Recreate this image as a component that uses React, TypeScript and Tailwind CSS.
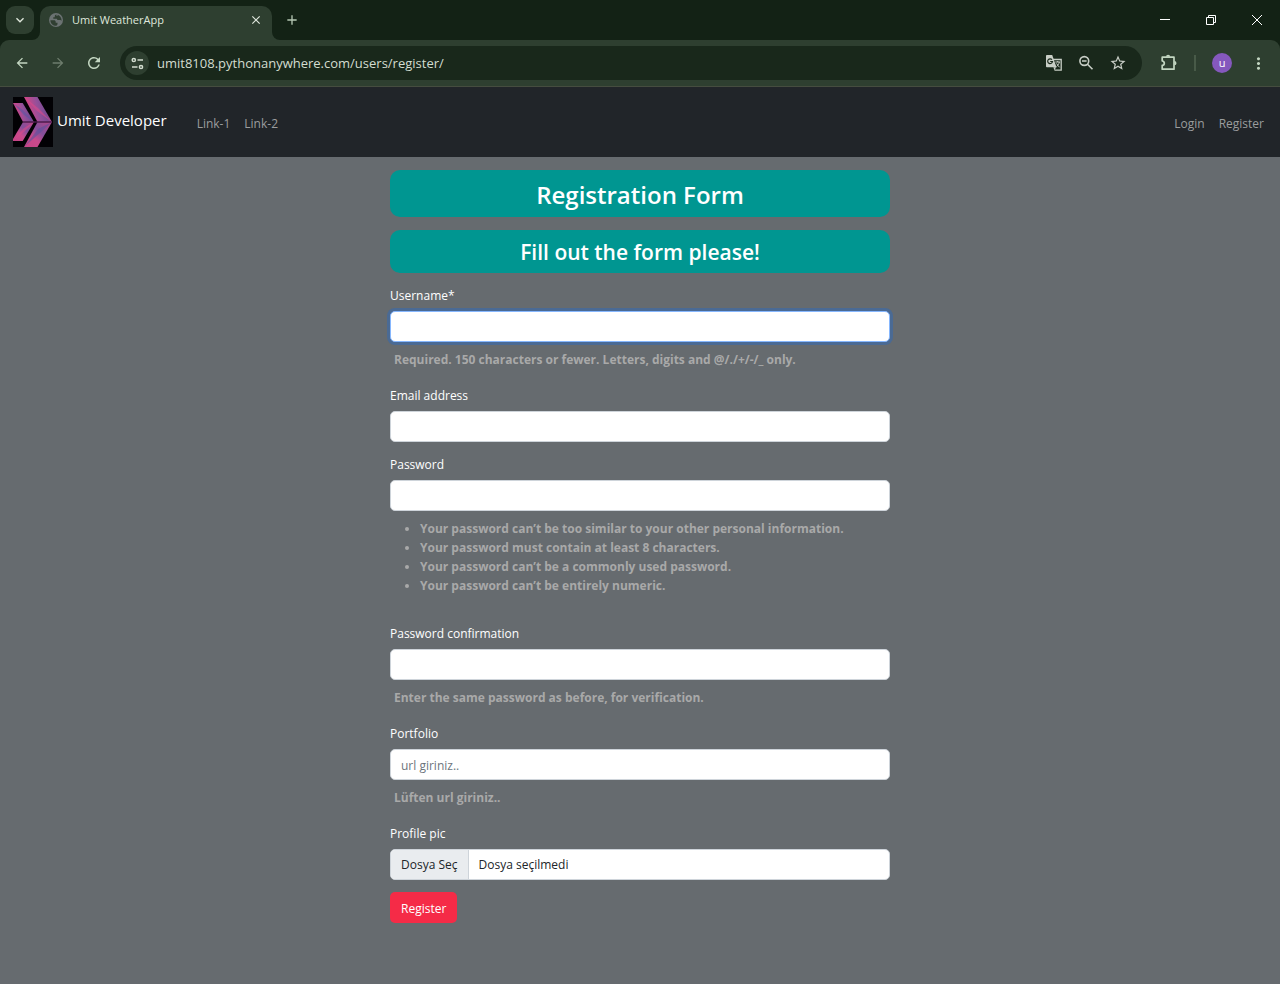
import React from "react";
import {
  MdAdd,
  MdArrowBack,
  MdArrowForward,
  MdClose,
  MdKeyboardArrowDown,
  MdMoreVert,
  MdRefresh,
  MdStarBorder,
} from "react-icons/md";

const inputClass =
  "block h-[31px] w-full rounded-[5px] border border-[#ced4da] bg-white px-2.5 pt-0.5 text-xs text-[#212529] outline-none placeholder:text-[#6c757d] focus:border-[#86b7fe] focus:shadow-[0_0_0_3px_#4a6a94]";

function GlobeIcon() {
  return (
    <svg width="16" height="16" viewBox="0 0 16 16">
      <circle cx="8" cy="8" r="7" fill="#6b7272" />
      <path d="M2.4 8.200h3.400c1.300 0 1.900.7 1.900 1.700v.9H9.500v1.200c0 .8-.5 1.500-1.300 1.800-3.300 0-5.800-2.500-5.800-5.600z" fill="#303f32" />
      <path d="M8.500 2.400c-1 .1-1.700.8-1.700 1.600v1.200H5.300v1.500h2.900c.9 0 1.200.7 1.200 1.400h2.400c.8 0 1.200.6 1.800.6.1-2.800-1.600-5-3.800-5.900 0 .9-.5 1.300-1.300 1.300z" fill="#303f32" />
    </svg>
  );
}

function TuneIcon() {
  return (
    <svg width="13" height="13" viewBox="0 0 13 13" fill="none" stroke="currentColor" strokeWidth="1.5">
      <circle cx="2.8" cy="3" r="1.6" />
      <path d="M6.5 3H12M1 10h5.5" />
      <circle cx="10" cy="10" r="1.6" />
    </svg>
  );
}

function TranslateIcon() {
  return (
    <svg width="18" height="18" viewBox="0 0 18 18" fill="none" stroke="currentColor">
      <path d="M8 5.5h8.200v10.700H9.500" strokeWidth="1.300" />
      <path d="M1.800 1h5.400l4.300 12.200H1.800A.9.900 0 0 1 1 12.300V1.900A.9.900 0 0 1 1.800 1z" fill="currentColor" stroke="none" />
      <path d="M8.400 13.200h2.800l-1.800 3z" fill="currentColor" stroke="none" />
      <path d="M7 5.700A2.400 2.400 0 1 0 7.500 7.500H5.200" stroke="#19281b" strokeWidth="1.200" />
      <path d="M10.300 8h4.800M12.700 7v1M14.300 8c-.3 2-1.500 3.700-2.900 4.800M11.600 9.400c.7 1.500 1.700 2.700 3 3.900" strokeWidth="1" />
    </svg>
  );
}

function ZoomOutIcon() {
  return (
    <svg width="16" height="16" viewBox="0 0 16 16" fill="none" stroke="currentColor" strokeWidth="1.600">
      <circle cx="6.300" cy="6" r="4.400" />
      <path d="M4 6h4.600M9.500 9.300l5 5" />
    </svg>
  );
}

function ExtensionIcon() {
  return (
    <svg width="18" height="18" viewBox="0 0 18 18">
      <path
        d="M2.200 3.200H14v12H2.200v-3.800c2.800-.3 2.800-4.100 0-4.400z"
        fill="none"
        stroke="currentColor"
        strokeWidth="1.700"
        strokeLinejoin="round"
      />
      <path d="M6 2.800a2.100 2.100 0 0 1 4.200 0zM14.400 7.100a2.100 2.100 0 0 1 0 4.200z" fill="currentColor" />
    </svg>
  );
}

function Logo() {
  return (
    <svg width="40" height="50" viewBox="0 0 40 50" aria-hidden="true">
      <defs>
        <linearGradient id="upper" x1="0" y1="0.6" x2="1" y2="0.4">
          <stop offset="0.2" stopColor="#c94789" />
          <stop offset="0.5" stopColor="#94509a" />
          <stop offset="0.75" stopColor="#7b4c94" />
          <stop offset="1" stopColor="#bd4383" />
        </linearGradient>
        <linearGradient id="lower" x1="0" y1="1" x2="1" y2="0">
          <stop offset="0" stopColor="#c64486" />
          <stop offset="0.35" stopColor="#c94a8c" />
          <stop offset="0.6" stopColor="#82509b" />
          <stop offset="1" stopColor="#b54487" />
        </linearGradient>
      </defs>
      <path d="M0 0h40v50H0z" fill="#020104" />
      <path d="M11 0h13.500L39 25H24.500z" fill="url(#upper)" />
      <path d="M24.500 25H39L24.500 50H11z" fill="url(#lower)" />
      <path d="M11 0l14 11 14 14-15-11z" fill="#d84a8a" opacity="0.6" />
      <path d="M39 25L25 32 11 50l17-15z" fill="#5d519c" opacity="0.6" />
      <path d="M0 6h9.700L21 25H10z" fill="url(#upper)" />
      <path d="M10 25h11L9.700 44H0v-2z" fill="url(#lower)" />
      <path d="M0 6l10 7 11 12-10-7z" fill="#5d55a3" opacity="0.6" />
      <path d="M21 25l-10 6L0 44l12-10z" fill="#d84a8a" opacity="0.6" />
      <path d="M10 25h29" stroke="#4c1d4d" strokeWidth="1.500" />
    </svg>
  );
}

function TabStrip() {
  return (
    <div className="flex h-10 items-end bg-[#132215] text-[#dfe7dc]">
      <button aria-label="Search tabs" className="mb-1.5 ml-1.5 flex size-7 items-center justify-center rounded-[9px] bg-[#2e3f30]">
        <MdKeyboardArrowDown size={16} />
      </button>
      <div className="relative ml-1.5 flex h-[34px] w-[232px] items-center rounded-t-[10px] bg-[#2e3f30] pb-1.5 pl-2 pr-[9px]">
        <svg className="absolute -left-2 bottom-0" width="8" height="8" viewBox="0 0 8 8">
          <path d="M8 0v8H0a8 8 0 0 0 8-8" fill="#2e3f30" />
        </svg>
        <svg className="absolute -right-2 bottom-0" width="8" height="8" viewBox="0 0 8 8">
          <path d="M0 0v8h8a8 8 0 0 1-8-8" fill="#2e3f30" />
        </svg>
        <GlobeIcon />
        <span className="ml-2 flex-1 text-[11px]">Umit WeatherApp</span>
        <button aria-label="Close tab">
          <MdClose size={14} />
        </button>
      </div>
      <button aria-label="New tab" className="mb-3 ml-3">
        <MdAdd size={16} className="text-[#b5c7b3]" />
      </button>
      <div className="ml-auto flex h-10 text-white">
        <button aria-label="Minimize" className="flex w-[46px] items-center justify-center">
          <svg width="10" height="10" viewBox="0 0 10 10" stroke="currentColor">
            <path d="M0 4.500h10" />
          </svg>
        </button>
        <button aria-label="Restore" className="flex w-[46px] items-center justify-center">
          <svg width="10" height="10" viewBox="0 0 10 10" fill="none" stroke="currentColor">
            <path d="M.5 2.500h7v7h-7zM2.500 2.500v-2h7v7h-2" />
          </svg>
        </button>
        <button aria-label="Close window" className="flex w-[46px] items-center justify-center">
          <svg width="10" height="10" viewBox="0 0 10 10" stroke="currentColor">
            <path d="M0 0l10 10M10 0L0 10" />
          </svg>
        </button>
      </div>
    </div>
  );
}

function Toolbar() {
  return (
    <div className="bg-[#132215]">
      <div className="flex h-[47px] items-center rounded-t-[9px] border-b border-[#454d3f] bg-[#2e3f30] pr-3 text-[#c3d6c1]">
        <button aria-label="Back" className="ml-3.5">
          <MdArrowBack size={16} />
        </button>
        <button aria-label="Forward" className="ml-5 text-[#6e7d6d]">
          <MdArrowForward size={16} />
        </button>
        <button aria-label="Reload" className="ml-[19px]">
          <MdRefresh size={18} />
        </button>
        <div className="ml-[17px] flex h-[34px] flex-1 items-center rounded-full bg-[#19281b] pl-[5px] pr-[15px] text-[#d3ddd0]">
          <button aria-label="Site information" className="flex size-6 items-center justify-center rounded-full bg-[#2e3f30]">
            <TuneIcon />
          </button>
          <input
            aria-label="Address"
            readOnly
            defaultValue="umit8108.pythonanywhere.com/users/register/"
            className="ml-2 min-w-0 flex-1 bg-transparent pt-0.5 text-[13px] outline-none"
          />
          <div className="flex items-center gap-[15px] text-[#c8cec6]">
            <button aria-label="Translate"><TranslateIcon /></button>
            <button aria-label="Zoom"><ZoomOutIcon /></button>
            <button aria-label="Bookmark"><MdStarBorder size={18} /></button>
          </div>
        </div>
        <button aria-label="Extensions" className="ml-[18px]"><ExtensionIcon /></button>
        <span className="ml-4 h-4 w-0.5 bg-[#485a48]" />
        <button aria-label="Profile" className="ml-4 flex size-5 items-center justify-center rounded-full bg-[#8558bd] pb-0.5 text-[11px] leading-none text-white">
          u
        </button>
        <button aria-label="Menu" className="ml-[17px]"><MdMoreVert size={19} /></button>
      </div>
    </div>
  );
}

function SiteNav() {
  return (
    <nav className="flex h-[70px] items-center bg-[#212529] pl-[13px] pr-4 text-xs text-[#9b9d9e]">
      <a href="#home" className="flex items-center gap-1 text-[15px] text-white">
        <Logo />
        <span className="pb-1">Umit Developer</span>
      </a>
      <div className="ml-[30px] flex flex-1 gap-3.5 pt-1">
        <a href="#link-1">Link-1</a>
        <a href="#link-2">Link-2</a>
      </div>
      <div className="flex gap-3.5 pt-1">
        <a href="#login">Login</a>
        <a href="#register">Register</a>
      </div>
    </nav>
  );
}

interface FieldProps {
  id: string;
  label: string;
  type?: string;
  placeholder?: string;
  help?: string;
  autoFocus?: boolean;
}

function Field({ id, label, type = "text", placeholder, help, autoFocus }: FieldProps) {
  return (
    <div>
      <label htmlFor={id} className="mb-1.5 block leading-[19px]">{label}</label>
      <input
        id={id}
        name={id}
        type={type}
        placeholder={placeholder}
        autoFocus={autoFocus}
        className={inputClass}
      />
      {help && <p className="mb-[17px] mt-2 pl-1 font-bold leading-[19px] text-[#a9a9a9]">{help}</p>}
    </div>
  );
}

const passwordRules = [
  "Your password can’t be too similar to your other personal information.",
  "Your password must contain at least 8 characters.",
  "Your password can’t be a commonly used password.",
  "Your password can’t be entirely numeric.",
];

export default function App() {
  return (
    <div className="flex min-h-screen flex-col bg-[#666b6f] font-['Open_Sans','Noto_Sans',sans-serif]">
      <TabStrip />
      <Toolbar />
      <SiteNav />
      <main className="mx-auto w-full max-w-[500px] pt-[13px] text-xs text-white">
        <h1 className="mb-[13px] rounded-[10px] bg-[#009691] pb-[7px] pt-[9px] text-center text-2xl font-semibold leading-[31px]">
          Registration Form
        </h1>
        <h2 className="mb-[13px] rounded-[10px] bg-[#009691] pb-[7px] pt-[9px] text-center text-[21px] font-semibold leading-[27px]">
          Fill out the form please!
        </h2>
        <form onSubmit={(e) => e.preventDefault()}>
          <Field
            id="username"
            label="Username*"
            help="Required. 150 characters or fewer. Letters, digits and @/./+/-/_ only."
            autoFocus
          />
          <Field id="email" label="Email address" type="email" />
          <div className="mt-[13px]">
            <Field id="password" label="Password" type="password" />
          </div>
          <ul className="mb-[29px] mt-2 list-disc pl-[30px] font-bold leading-[19px] text-[#a9a9a9]">
            {passwordRules.map((rule) => (
              <li key={rule}>{rule}</li>
            ))}
          </ul>
          <Field
            id="confirmation"
            label="Password confirmation"
            type="password"
            help="Enter the same password as before, for verification."
          />
          <Field id="portfolio" label="Portfolio" type="url" placeholder="url giriniz.." help="Lüften url giriniz.." />
          <label htmlFor="picture" className="block leading-[19px]">
            Profile pic
            <span className="mt-1.5 flex h-[31px] overflow-hidden rounded-[5px] border border-[#ced4da] bg-white text-[#212529]">
              <span className="flex items-center border-r border-[#ced4da] bg-[#e9ecef] px-2.5">Dosya Seç</span>
              <span className="flex items-center px-2.5">Dosya seçilmedi</span>
            </span>
          </label>
          <input id="picture" type="file" className="sr-only" />
          <button type="submit" className="mt-3 h-[31px] rounded-[5px] bg-[#f52b47] px-[11px] pt-0.5">
            Register
          </button>
        </form>
      </main>
    </div>
  );
}
